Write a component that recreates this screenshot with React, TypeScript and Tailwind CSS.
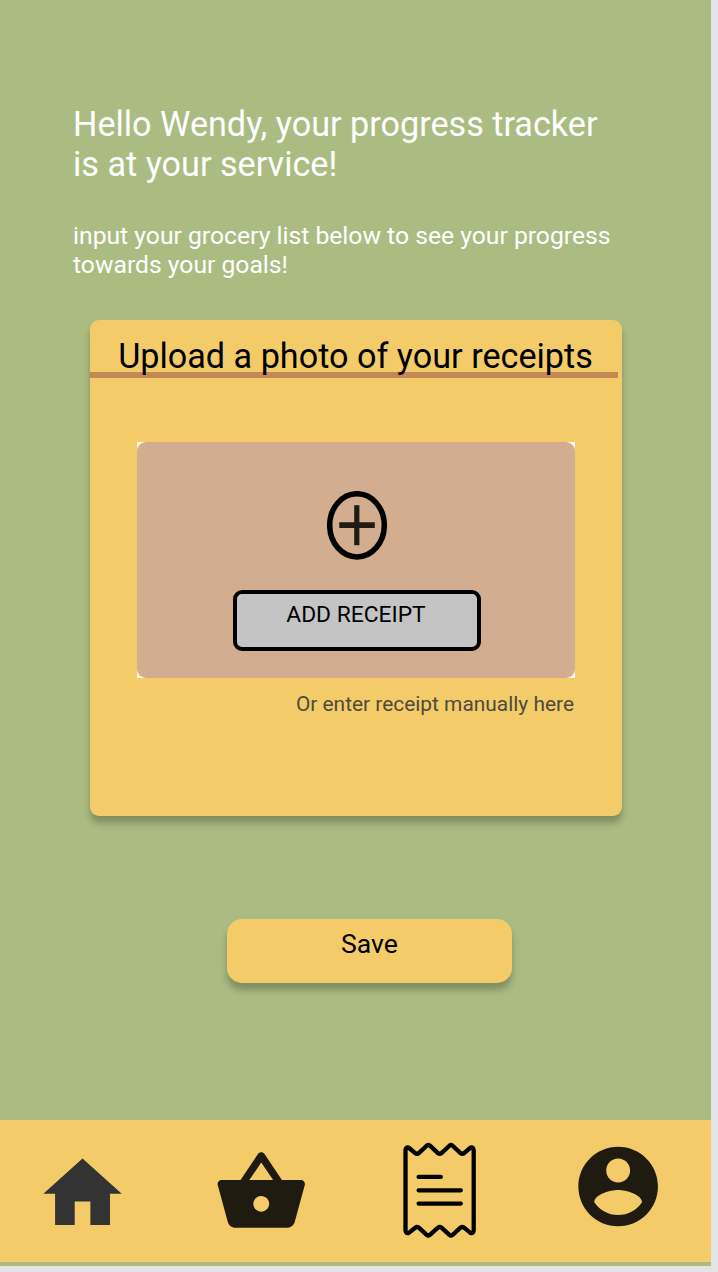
function HomeIcon() {
  return (
    <svg viewBox="-0.128 -0.18 24.49 24.49" className="size-24" fill="#333333">
      <path d="M10 20v-6h4v6h5v-8h3L12 3 2 12h3v8z" />
    </svg>
  );
}

function BasketIcon() {
  return (
    <svg viewBox="-0.15 -0.076 24.18 24.18" className="size-24" fill="#1f1b10">
      <path d="M17.21 9l-4.38-6.56c-.19-.28-.51-.42-.83-.42-.32 0-.64.14-.83.43L6.79 9H2c-.55 0-1 .45-1 1 0 .09.01.18.04.27l2.54 9.27c.23.84 1 1.46 1.92 1.46h13c.92 0 1.69-.62 1.93-1.46l2.54-9.27L23 10c0-.55-.45-1-1-1h-4.79zM9 9l3-4.4L15 9H9zm3 8c-1.1 0-2-.9-2-2s.9-2 2-2 2 .9 2 2-.9 2-2 2z" />
    </svg>
  );
}

function ReceiptIcon() {
  return (
    <svg
      viewBox="0 0 80 104"
      className="h-[104px] w-[80px]"
      fill="none"
      stroke="#000"
      strokeWidth="4.3"
      strokeLinecap="round"
      strokeLinejoin="round"
    >
      <path d="M5.5 10.5 Q5.5 7 8.5 7.5 L15.2 13.1 Q17 14.3 18.8 13.1 L26.7 5.7 Q28.3 4.4 29.9 5.7 L37.9 13.1 Q39.7 14.3 41.5 13.1 L49.4 5.7 Q51 4.4 52.6 5.7 L60.5 13.1 Q62.3 14.3 64.1 13.1 L70.7 7.5 Q73.7 7 73.7 10.5 V90 Q73.7 93.7 70.7 93.1 L64.1 87.7 Q62.3 86.3 60.5 87.7 L52.6 94.9 Q51 96.2 49.4 94.9 L41.5 87.7 Q39.7 86.3 37.9 87.7 L29.9 94.9 Q28.3 96.2 26.7 94.9 L18.8 87.7 Q17 86.3 15.2 87.7 L8.5 93.1 Q5.5 93.7 5.5 90 Z" />
      <path d="M18.6 36.9H40.8M18.6 50.3H60.8M18.6 63.6H60.8" />
    </svg>
  );
}

function AccountIcon() {
  return (
    <svg viewBox="-0.1 -0.17 24.12 24.12" className="size-24" fill="#1f1b10">
      <path d="M12 2C6.48 2 2 6.48 2 12s4.48 10 10 10 10-4.48 10-10S17.52 2 12 2zm0 3c1.66 0 3 1.34 3 3s-1.34 3-3 3-3-1.34-3-3 1.34-3 3-3zm0 14.2c-2.5 0-4.71-1.28-6-3.22.03-1.99 4-3.08 6-3.08 1.99 0 5.97 1.09 6 3.08-1.29 1.94-3.5 3.22-6 3.22z" />
    </svg>
  );
}

function AddIcon() {
  return (
    <svg viewBox="0 0 60 70" className="h-[70px] w-[60px]" fill="none">
      <ellipse cx="30" cy="34.3" rx="27.3" ry="31.6" stroke="#000" strokeWidth="5.5" />
      <path d="M12.3 34.2H47.8" stroke="#1f1b10" strokeWidth="5.8" />
      <path d="M29.8 14.2V54.2" stroke="#1f1b10" strokeWidth="5.2" />
    </svg>
  );
}

export default function App() {
  return (
    <div className="h-[1272px] w-[718px] overflow-hidden bg-[#e4e4e4] font-['Roboto',sans-serif]">
      <div className="flex h-[1266px] w-[711.4px] flex-col bg-[#abbc82]">
        <header className="h-[320px] pl-[73px] pt-[104px] text-white">
          <h1 className="whitespace-nowrap text-[34.18px] leading-[40px]">
            Hello Wendy, your progress tracker
            <br />
            is at your service!
          </h1>
          <p className="mt-[38px] whitespace-nowrap text-[24.7px] leading-[28.5px]">
            input your grocery list below to see your progress
            <br />
            towards your goals!
          </p>
        </header>

        <main className="flex h-[800px] flex-col">
          <section className="ml-[90px] flex h-[496px] w-[532px] flex-col rounded-[9px] bg-[#f3cc69] shadow-[0_7px_7px_rgba(0,0,0,0.25)]">
            <div className="h-[58px] w-[528px] border-b-[6px] border-[#c48a56] pt-[16px] text-center">
              <h2 className="relative whitespace-nowrap pl-[3px] text-[34.18px] leading-[40px] text-black">
                Upload a photo of your receipts
              </h2>
            </div>
            <div className="ml-[47.4px] mt-[63.5px] h-[236px] w-[437.4px] bg-[#fffbe6]">
              <div className="flex h-full flex-col items-center rounded-[9px] bg-[#d3ad8f] pl-[1.8px] pt-[49px]">
                <AddIcon />
                <button className="mt-[29.5px] flex h-[60.5px] w-[248px] justify-center rounded-[9px] border-4 border-black bg-[#c4c4c4] pr-[2px] pt-[7px] text-[22.8px] leading-[27px] text-black">
                  ADD RECEIPT
                </button>
              </div>
            </div>
            <a className="mr-[48px] mt-[14px] text-right text-[20.9px] leading-[25px] text-[#4f4a3c]">
              Or enter receipt manually here
            </a>
          </section>
          <button className="ml-[227px] mt-[102.5px] flex h-[64.5px] w-[285px] justify-center rounded-[15px] bg-[#f3cc69] pt-[9px] text-[26.6px] leading-[32px] text-black shadow-[0_7px_7px_rgba(0,0,0,0.25)]">
            Save
          </button>
        </main>

        <nav className="flex h-[142.3px] items-start bg-[#f3cc69] pl-[35px]">
          <div className="pt-[26px]">
            <HomeIcon />
          </div>
          <div className="ml-[82px] pt-[24px]">
            <BasketIcon />
          </div>
          <div className="ml-[91px] pt-[20px]">
            <ReceiptIcon />
          </div>
          <div className="ml-[90px] pt-[18px]">
            <AccountIcon />
          </div>
        </nav>
      </div>
    </div>
  );
}
